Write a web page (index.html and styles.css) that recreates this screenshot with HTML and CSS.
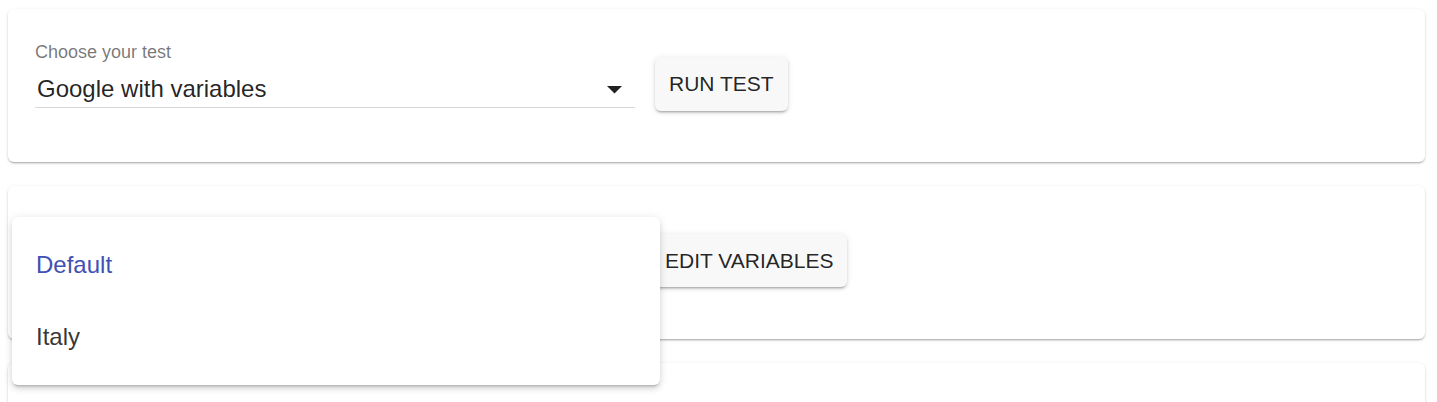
FILE: index.html
```html
<!DOCTYPE html>
<html lang="en">
<head>
<meta charset="utf-8">
<title>Test runner</title>
<link rel="stylesheet" href="styles.css">
</head>
<body>
<div class="page">
  <section class="card">
    <div class="field">
      <label class="field-label">Choose your test</label>
      <div class="field-input">
        <span class="field-value">Google with variables</span>
        <svg class="field-arrow" width="15" height="8" viewBox="0 0 15 8"><path d="M0 0 L7.5 7.5 L15 0 Z" fill="#202020"/></svg>
      </div>
    </div>
    <button class="btn">RUN TEST</button>
  </section>

  <section class="card">
    <div class="field">
      <label class="field-label">Choose your environment</label>
      <div class="field-input">
        <span class="field-value">Default</span>
        <svg class="field-arrow" width="15" height="8" viewBox="0 0 15 8"><path d="M0 0 L7.5 7.5 L15 0 Z" fill="#202020"/></svg>
      </div>
    </div>
    <button class="btn btn-edit">EDIT VARIABLES</button>
  </section>

  <section class="card card-empty"></section>
</div>

<ul class="menu">
  <li class="menu-item selected">Default</li>
  <li class="menu-item">Italy</li>
</ul>
</body>
</html>
```

FILE: styles.css
```css
html, body {
  margin: 0;
  padding: 0;
  background: #ffffff;
  overflow: hidden;
}

body {
  font-family: "Liberation Sans", Arial, sans-serif;
  color: rgba(0, 0, 0, 0.87);
}

.page {
  display: flex;
  flex-direction: column;
  gap: 24px;
  padding: 9px 12px 0 8px;
}

.card {
  height: 153px;
  box-sizing: border-box;
  background: #ffffff;
  border-radius: 6px;
  box-shadow: 0 2px 2px -1px rgba(0, 0, 0, 0.22),
              0 1px 2px 0 rgba(0, 0, 0, 0.12),
              0 1px 4px 0 rgba(0, 0, 0, 0.08);
  display: flex;
  align-items: flex-start;
  padding-left: 27px;
  flex-shrink: 0;
}

.field {
  width: 600px;
  margin-top: 33px;
  display: flex;
  flex-direction: column;
}

.field-label {
  font-size: 18px;
  line-height: 21px;
  color: rgba(0, 0, 0, 0.54);
}

.field-input {
  margin-top: 12px;
  padding: 0 0 4px 2px;
  border-bottom: 1px solid #d8d8d8;
  display: flex;
  align-items: center;
  justify-content: space-between;
}

.field-value {
  font-size: 24px;
  line-height: 28px;
  color: rgba(0, 0, 0, 0.87);
}

.field-arrow {
  margin-right: 13px;
  margin-top: 2px;
}

.btn {
  margin-top: 48px;
  margin-left: 20px;
  font-family: "Liberation Sans", Arial, sans-serif;
  font-size: 21px;
  line-height: 36px;
  padding: 9px 14px;
  border: none;
  border-radius: 6px;
  background: #f8f8f8;
  color: rgba(0, 0, 0, 0.87);
  box-shadow: 0 3px 2px -2px rgba(0, 0, 0, 0.2),
              0 2px 3px 0 rgba(0, 0, 0, 0.12),
              0 1px 6px 0 rgba(0, 0, 0, 0.1);
}

.btn-edit {
  margin-left: 16px;
  line-height: 35px;
}

.menu {
  position: absolute;
  left: 12px;
  top: 217px;
  width: 648px;
  margin: 0;
  padding: 12px 0;
  list-style: none;
  background: #ffffff;
  border-radius: 6px;
  box-shadow: 0 3px 3px -2px rgba(0, 0, 0, 0.25),
              0 4px 6px 0 rgba(0, 0, 0, 0.1),
              0 1px 8px 1px rgba(0, 0, 0, 0.08);
}

.menu-item {
  height: 72px;
  display: flex;
  align-items: center;
  padding-left: 24px;
  font-size: 24px;
  color: rgba(0, 0, 0, 0.8);
}

.menu-item.selected {
  color: #3f51b5;
}
```
